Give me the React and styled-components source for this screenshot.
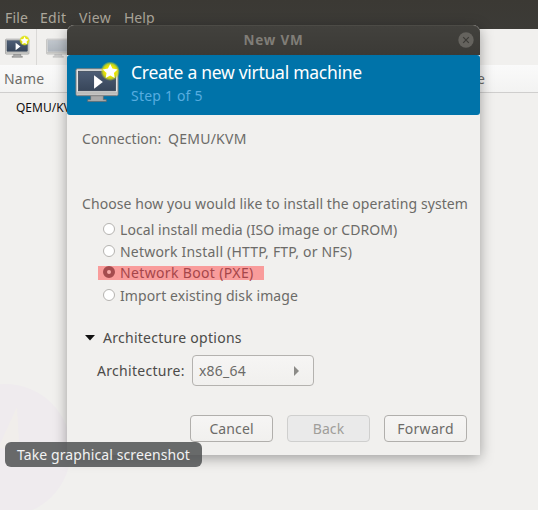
import React from "react";
import styled, { createGlobalStyle } from "styled-components";

const GlobalStyle = createGlobalStyle`
  *, *::before, *::after { box-sizing: border-box; }
  body { margin: 0; overflow: hidden; background: #f1f0ee; font-family: "Noto Sans", "Open Sans", sans-serif; font-size: 14px; }
`;

const Desktop = styled.div`
  position: relative;
  width: 538px;
  height: 510px;
  overflow: hidden;
  background: #f1f0ee;
  color: #6c6b68;
`;

const Label = styled.span`
  font-size: ${(p) => p.$size || 14}px;
  letter-spacing: ${(p) => p.$track || 0}px;
  white-space: pre;
`;

const MenuBar = styled.nav`
  display: flex;
  gap: 12px;
  height: 29px;
  padding: 8px 0 0 5px;
  line-height: 20px;
  color: #aca79b;
  background: linear-gradient(#3b3934, #3c3b37);
`;

const MenuItem = styled.span`
  width: ${(p) => p.$width}px;
  white-space: nowrap;
`;

const Toolbar = styled.div`
  display: flex;
  height: 36px;
  background: #f1f0ee;
`;

const ToolButton = styled.div`
  width: 37px;
  padding: 6px 0 0 5px;
  border-right: 1px solid #dad9d7;
  opacity: ${(p) => (p.$disabled ? 0.85 : 1)};
  & + & { padding-left: 9px; width: 44px; border: 0; }
`;

const TableHead = styled.div`
  display: flex;
  justify-content: space-between;
  height: 28px;
  padding: 4px 53px 0 4px;
  line-height: 20px;
  border-bottom: 1px solid #cfcecd;
  background: linear-gradient(#fafafa, #f3f3f2);
`;

const TableRow = styled.div`
  padding: 5px 0 0 16px;
  line-height: 18px;
  color: #111;
`;

const Emblem = styled.svg`
  position: absolute;
  left: 0;
  top: 380px;
`;

const Dialog = styled.section`
  position: absolute;
  left: 67px;
  top: 25px;
  width: 413px;
  height: 430px;
  border-radius: 7px 7px 0 0;
  background: #f1f0ee;
  box-shadow: 0 3px 14px rgba(0, 0, 0, 0.35);
`;

const TitleBar = styled.header`
  display: grid;
  grid-template-columns: 28px 1fr 28px;
  align-items: center;
  height: 30px;
  border-top: 1px solid #4c4b46;
  border-radius: 7px 7px 0 0;
  background: linear-gradient(#42413d, #3b3a36);
  color: #807d77;
  text-align: center;
  font-weight: 700;
  line-height: 27px;
  padding-bottom: 1px;
`;

const CloseIcon = styled.svg`
  justify-self: center;
`;

const Banner = styled.div`
  display: flex;
  height: 60px;
  padding: 6px 0 0 8px;
  border-radius: 3px;
  background: #0073a9;
`;

const BannerText = styled.div`
  display: flex;
  flex-direction: column;
  padding: 0 0 0 11px;
  color: #fff;
  line-height: 22px;
`;

const Step = styled.div`
  color: #57ade0;
  line-height: 26px;
`;

const Content = styled.div`
  padding: 14px 13px 0 15px;
  line-height: 20px;
`;

const Connection = styled.div`
  display: grid;
  grid-template-columns: 86px 1fr;
  margin-bottom: 45px;
`;

const Options = styled.div`
  padding: 5px 0 0 16px;
`;

const Option = styled.div`
  display: flex;
  align-items: center;
  width: fit-content;
  height: 22px;
`;

const Highlight = styled.div`
  display: flex;
  align-items: center;
  width: 166px;
  height: 14px;
  margin-bottom: 2px;
  background: #f99c9b;
  color: #a5464a;
`;

const Radio = styled.span`
  flex: none;
  width: 12px;
  height: 12px;
  margin: -2px 5px 0 5px;
  border-radius: 50%;
  border: ${(p) => (p.$checked ? "4px solid #a54b4e" : "1px solid #b5b3b0")};
  background: ${(p) => (p.$checked ? "#f7aaa8" : "#fff")};
`;

const Expander = styled.div`
  display: flex;
  align-items: center;
  gap: 8px;
  height: 20px;
  margin-top: 21px;
  padding-left: 3px;
  color: #4c4b49;
`;

const ArchRow = styled.div`
  display: flex;
  align-items: center;
  height: 31px;
  margin-top: 7px;
  padding-left: 15px;
  color: #4c4b49;
`;

const ArchLabel = styled.span`
  width: 95px;
`;

const Combo = styled.div`
  display: flex;
  align-items: center;
  justify-content: space-between;
  width: 122px;
  height: 31px;
  padding: 0 14px 0 6px;
  border: 1px solid #b4b2af;
  border-radius: 4px;
  background: linear-gradient(#f6f5f4, #f1f0ee);
  color: #6c6b68;
`;

const Actions = styled.footer`
  display: flex;
  justify-content: flex-end;
  gap: 14px;
  margin-top: 29px;
`;

const Button = styled.button`
  width: 83px;
  height: 27px;
  padding: 0;
  border: 1px solid ${(p) => (p.disabled ? "#cfcfce" : "#b1afac")};
  border-radius: 4px;
  background: ${(p) => (p.disabled ? "#eaeaea" : "linear-gradient(#f6f5f4, #f1f0ee)")};
  color: ${(p) => (p.disabled ? "#a09e9a" : "#6c6b68")};
  font: inherit;
  line-height: 25px;
`;

const Tooltip = styled.div`
  position: absolute;
  left: 5px;
  top: 442px;
  width: 197px;
  height: 25px;
  padding-left: 12px;
  border-radius: 6px;
  background: rgba(76, 78, 79, 0.83);
  color: #f2f2f2;
  line-height: 25px;
`;

function Monitor({ width, height, id, active = true }) {
  return (
    <svg width={width} height={height} viewBox="0 0 46 42">
      <defs>
        <linearGradient id={`${id}s`} x2="0" y2="1">
          <stop stopColor={active ? "#4d5d75" : "#b8bfc7"} />
          <stop offset="1" stopColor={active ? "#38465a" : "#a4acb5"} />
        </linearGradient>
        <radialGradient id={`${id}g`}>
          <stop offset=".55" stopColor="#ece500" />
          <stop offset=".75" stopColor="#dce20c" stopOpacity=".85" />
          <stop offset="1" stopColor="#c9dd20" stopOpacity="0" />
        </radialGradient>
      </defs>
      <path d="M16 34h13v5h3v2H13v-2h3z" fill={active ? "#aaa" : "#c8c8c8"} stroke={active ? "#666" : "#aaa"} strokeWidth=".7" />
      <rect x="1" y="7.5" width="43" height="27.5" rx="1.5" fill="#e4e4e3" stroke={active ? "#777" : "#999"} />
      <path d="M2 31h41v3H2z" fill="#bdbdbb" />
      <rect x="3.5" y="10" width="38" height="20" fill={`url(#${id}s)`} stroke={active ? "#34404e" : "#99a0a8"} strokeWidth=".7" />
      {active && (
        <>
          <path d="m19.5 14 9 7-9 7z" fill="#fff" />
          <circle cx="36" cy="10" r="10" fill={`url(#${id}g)`} />
          <path d="m36 2.6 2.3 4.7 5.2.8-3.7 3.6.8 5.2-4.6-2.5-4.6 2.5.8-5.2-3.7-3.6 5.2-.8z" fill="#fff" />
        </>
      )}
    </svg>
  );
}

export default function App() {
  return (
    <Desktop>
      <GlobalStyle />
      <MenuBar>
        <MenuItem $width={23}><Label $track={0.2}>File</Label></MenuItem>
        <MenuItem $width={27}><Label $track={0.3}>Edit</Label></MenuItem>
        <MenuItem $width={33}><Label $track={0.4}>View</Label></MenuItem>
        <MenuItem $width={31}><Label>Help</Label></MenuItem>
      </MenuBar>
      <Toolbar>
        <ToolButton><Monitor width={25} height={23} id="new" /></ToolButton>
        <ToolButton $disabled><Monitor width={25} height={23} id="open" active={false} /></ToolButton>
      </Toolbar>
      <TableHead><Label $track={0.2}>Name</Label><Label>e</Label></TableHead>
      <TableRow><Label $size={12}>QEMU/KVM</Label></TableRow>
      <Emblem width="72" height="130">
        <circle cx="5" cy="70" r="66" fill="#efebee" />
        <path d="M0 64 17 27l2 35-7 8-12-2z" fill="#f1eeeb" />
      </Emblem>

      <Dialog>
        <TitleBar>
          <span />
          <Label $size={13.5} $track={0.8}>New VM</Label>
          <CloseIcon width="16" height="16" viewBox="0 0 16 16">
            <circle cx="8" cy="8" r="7.7" fill="#65635e" />
            <path d="m5.2 5.2 5.6 5.6m0-5.6-5.6 5.6" stroke="#3c3b37" strokeWidth="1.2" />
          </CloseIcon>
        </TitleBar>
        <Banner>
          <Monitor width={45} height={42} id="wizard" />
          <BannerText>
            <Label $size={17.5} $track={-0.28}>Create a new virtual machine</Label>
            <Step><Label $track={0.2}>Step 1 of 5</Label></Step>
          </BannerText>
        </Banner>
        <Content>
          <Connection><Label $track={0.05}>Connection:</Label><Label $track={0.25}>QEMU/KVM</Label></Connection>
          <Label $track={0.07}>Choose how you would like to install the operating system</Label>
          <Options>
            <Option><Radio /><Label $track={0.07}>Local install media (ISO image or CDROM)</Label></Option>
            <Option><Radio /><Label $track={0.2}>Network Install (HTTP, FTP, or NFS)</Label></Option>
            <Option><Highlight><Radio $checked /><Label $track={0.35}>Network Boot (PXE)</Label></Highlight></Option>
            <Option><Radio /><Label $track={0.1}>Import existing disk image</Label></Option>
          </Options>
          <Expander>
            <svg width="10" height="6"><path d="M0 0h10L5 5.5z" fill="#111" /></svg>
            <Label $track={0.27}>Architecture options</Label>
          </Expander>
          <ArchRow>
            <ArchLabel><Label $track={0.3}>Architecture:</Label></ArchLabel>
            <Combo>
              <Label $track={0.2}>x86_64</Label>
              <svg width="5" height="10"><path d="M0 0 5 5 0 10z" fill="#8c8b88" /></svg>
            </Combo>
          </ArchRow>
          <Actions>
            <Button><Label $track={0.1}>Cancel</Label></Button>
            <Button disabled><Label $track={0.1}>Back</Label></Button>
            <Button><Label $track={0.3}>Forward</Label></Button>
          </Actions>
        </Content>
      </Dialog>
      <Tooltip><Label $track={0.1}>Take graphical screenshot</Label></Tooltip>
    </Desktop>
  );
}
